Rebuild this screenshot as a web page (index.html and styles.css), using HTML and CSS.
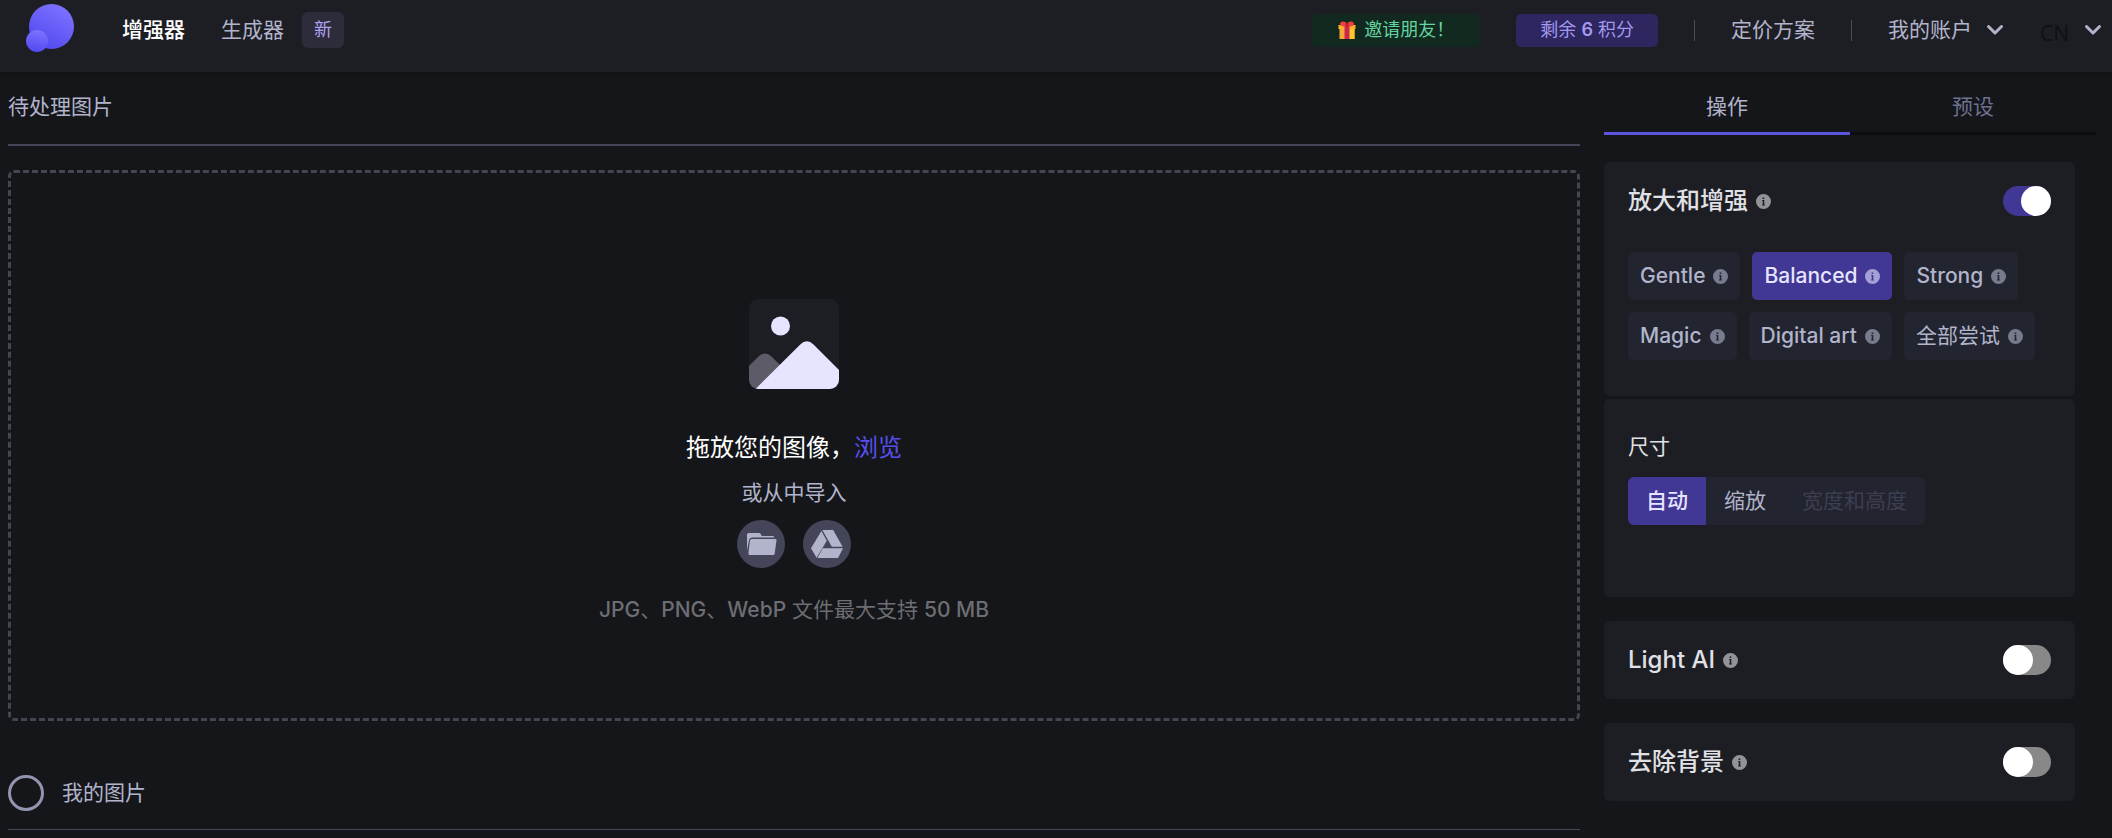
FILE: index.html
```html
<!DOCTYPE html>
<html lang="zh-CN">
<head>
    <title>增强器</title>
    <meta charset="UTF-8">
    <meta name="viewport" content="width=device-width, initial-scale=1">
    <link rel="stylesheet" href="styles.css">
</head>
<body>
    <svg class="sprite" aria-hidden="true">
        <symbol id="info" viewBox="0 0 15 15">
            <path fill="currentColor" fill-rule="evenodd" d="M7.5 0a7.5 7.5 0 1 1 0 15a7.5 7.5 0 0 1 0-15zM6.6 3.6v1.500h1.700V3.600zM6.200 6v1h.5v3.600h-.6v1h2.800v-1h-.6V6z"/>
        </symbol>
        <symbol id="chevron" viewBox="0 0 18 12">
            <path fill="none" stroke="currentColor" stroke-width="3" stroke-linecap="round" stroke-linejoin="round" d="M2.5 2.500L9 9L15.500 2.500"/>
        </symbol>
    </svg>

    <header class="header">
        <a class="logo" href="#" aria-label="首页">
            <svg width="48" height="52" viewBox="0 0 48 52">
                <defs>
                    <linearGradient id="big" x1="0.8" y1="0" x2="0.2" y2="1">
                        <stop offset="0" stop-color="#7f74ff"/>
                        <stop offset="1" stop-color="#4f46f0"/>
                    </linearGradient>
                    <linearGradient id="small" x1="0.6" y1="0" x2="0.4" y2="1">
                        <stop offset="0" stop-color="#7d73ff"/>
                        <stop offset="1" stop-color="#5148f2"/>
                    </linearGradient>
                </defs>
                <circle cx="25.500" cy="22.500" r="22.500" fill="url(#big)"/>
                <circle cx="11" cy="37" r="11" fill="url(#small)"/>
            </svg>
        </a>
        <nav class="nav">
            <a class="active" href="#">增强器</a>
            <a href="#">生成器</a>
            <span class="badge">新</span>
        </nav>
        <div class="header-right">
            <button class="pill invite" type="button">
                <svg width="18" height="18" viewBox="0 0 18 18" aria-hidden="true">
                    <path fill="#f9a63a" d="M1.500 7h15v11h-15z"/>
                    <path fill="#ffc928" d="M11 7h5.500v11H11z"/>
                    <path fill="#ffb02e" d="M.5 4h17v4H.5z"/>
                    <path fill="#c9284d" d="M6.500 4h5v14h-5z"/>
                    <path fill="#f0413c" d="M9 5C5 6 1.500 5 2.200 2.200C3-.6 7.500.2 9 2.500C10.500.2 15-.6 15.800 2.200C16.500 5 13 6 9 5z"/>
                    <path fill="#b81f3f" d="M7.500 2h3v3.500h-3z"/>
                </svg>
                邀请朋友！
            </button>
            <button class="pill credits" type="button"><span>剩余 <b>6</b> 积分</span></button>
            <span class="separator"></span>
            <a href="#">定价方案</a>
            <span class="separator"></span>
            <button class="account" type="button">
                我的账户
                <svg width="18" height="12"><use href="#chevron"/></svg>
            </button>
            <label class="language">
                <select aria-label="语言">
                    <option>CN</option>
                </select>
                <svg width="18" height="12"><use href="#chevron"/></svg>
            </label>
        </div>
    </header>

    <div class="page">
        <main class="content">
            <h2 class="section-title">待处理图片</h2>

            <section class="dropzone">
                <svg width="90" height="90" viewBox="0 0 90 90" aria-hidden="true">
                    <clipPath id="frame"><rect width="90" height="90" rx="9"/></clipPath>
                    <g clip-path="url(#frame)">
                        <rect width="90" height="90" fill="#1d1e24"/>
                        <circle cx="31.500" cy="27" r="9.500" fill="#e6e4ff"/>
                        <path fill="#5d5b68" d="M0 67L9.500 57.500Q16 51.500 22.500 57.500L32 67V90H0z"/>
                        <path fill="#e6e4ff" d="M6.500 90L51 45.800Q57.700 39 64.500 45.500L90 71V90z"/>
                    </g>
                </svg>
                <p class="drop-title">拖放您的图像，<a href="#">浏览</a></p>
                <p class="drop-sub">或从中导入</p>
                <div class="sources">
                    <button type="button" aria-label="文件夹">
                        <svg width="48" height="48" viewBox="0 0 48 48">
                            <path d="M10 31V14.500Q10 13 11.500 13H22Q23.500 13 24 14.500L24.700 16H36Q37.300 16 37.300 17.500H15Q12.500 17.500 12 20z"/>
                            <path d="M15 19H38.500Q39.700 19 39.500 20.200L37.700 33.500Q37.500 35 36 35H12.500Q11.200 35 11.400 33.500L12.800 21Q13 19 15 19z"/>
                        </svg>
                    </button>
                    <button type="button" aria-label="Google Drive">
                        <svg width="48" height="48" viewBox="0 0 48 48">
                            <path d="M19.300 10H30.200L39.600 26.800H28.800z"/>
                            <path d="M18.400 11L23.800 20.700L13.600 37.700L8 28.200z"/>
                            <path d="M19.700 28.300H40L35 38H14.400z"/>
                        </svg>
                    </button>
                </div>
                <p class="drop-hint"><b>JPG</b>、<b>PNG</b>、<b>WebP</b> 文件最大支持 <b>50 MB</b></p>
            </section>

            <div class="my-images">
                <input type="checkbox" id="select-all">
                <label for="select-all">我的图片</label>
            </div>
        </main>

        <aside class="sidebar">
            <div class="tabs">
                <button class="tab active" type="button">操作</button>
                <button class="tab" type="button">预设</button>
            </div>

            <section class="card upscale">
                <div class="card-head">
                    <label for="upscale">放大和增强</label>
                    <svg class="info" width="15" height="15"><use href="#info"/></svg>
                    <input class="toggle" type="checkbox" id="upscale" checked>
                </div>
                <div class="chips">
                    <button class="chip" type="button"><b>Gentle</b> <svg class="info" width="15" height="15"><use href="#info"/></svg></button>
                    <button class="chip active" type="button"><b>Balanced</b> <svg class="info" width="15" height="15"><use href="#info"/></svg></button>
                    <button class="chip" type="button"><b>Strong</b> <svg class="info" width="15" height="15"><use href="#info"/></svg></button>
                </div>
                <div class="chips">
                    <button class="chip" type="button"><b>Magic</b> <svg class="info" width="15" height="15"><use href="#info"/></svg></button>
                    <button class="chip" type="button"><b>Digital art</b> <svg class="info" width="15" height="15"><use href="#info"/></svg></button>
                    <button class="chip" type="button">全部尝试 <svg class="info" width="15" height="15"><use href="#info"/></svg></button>
                </div>
            </section>

            <section class="card size">
                <h3>尺寸</h3>
                <div class="segments">
                    <button class="active" type="button">自动</button>
                    <button type="button">缩放</button>
                    <button type="button" disabled>宽度和高度</button>
                </div>
            </section>

            <section class="card">
                <div class="card-head">
                    <label for="light">Light AI</label>
                    <svg class="info" width="15" height="15"><use href="#info"/></svg>
                    <input class="toggle" type="checkbox" id="light">
                </div>
            </section>

            <section class="card">
                <div class="card-head">
                    <label for="background">去除背景</label>
                    <svg class="info" width="15" height="15"><use href="#info"/></svg>
                    <input class="toggle" type="checkbox" id="background">
                </div>
            </section>
        </aside>
    </div>
</body>
</html>
```
FILE: styles.css
```css
* {
    box-sizing: border-box;
}

body {
    margin: 0;
    background-color: #15161a;
    color: #b1b4cb;
    font-family: Inter, "Noto Sans CJK SC", sans-serif;
    font-size: 21px;
    line-height: 30px;
}

h2, h3, p {
    margin: 0;
    font-size: 21px;
    font-weight: 400;
}

b {
    font-weight: 500;
}

a {
    color: inherit;
    text-decoration: none;
}

button, select {
    margin: 0;
    padding: 0;
    border: 0;
    background: none;
    color: inherit;
    font: inherit;
    cursor: pointer;
}

svg {
    display: block;
    flex-shrink: 0;
}

.sprite {
    display: none;
}

/* header */

.header {
    display: flex;
    align-items: center;
    height: 72px;
    padding: 0 10px 12px 26px;
    background-color: #1d1e24;
    box-shadow: 0 1px 12px rgba(0, 0, 0, 0.2);
    white-space: nowrap;
}

.nav {
    display: flex;
    align-items: center;
    gap: 36px;
    margin-left: 48px;
}

.nav .active {
    color: #fff;
    font-weight: 500;
}

.badge {
    margin-left: -18px;
    padding: 3px 12px;
    border-radius: 6px;
    background-color: #2d2c3a;
    color: #aca2ee;
    font-size: 18px;
}

.header-right {
    display: flex;
    align-items: center;
    gap: 36px;
    margin-left: auto;
}

.pill {
    display: flex;
    align-items: center;
    justify-content: center;
    gap: 8px;
    height: 33px;
    padding: 0 24px;
    border-radius: 5px;
    font-size: 18px;
}

.invite {
    padding: 0 26px;
    background-color: #11291f;
    color: #65d3a0;
}

.credits {
    background-color: #2d265f;
    color: #a39af0;
}

.credits b {
    font-weight: 600;
}

.separator {
    width: 1px;
    height: 21px;
    background-color: #4a4b5c;
}

.account, .language {
    display: flex;
    align-items: center;
    gap: 14px;
}

.language select {
    appearance: none;
    padding-top: 6px;
    color: #101116;
    font-family: "Noto Sans", sans-serif;
}

/* layout */

.page {
    display: flex;
    gap: 24px;
    padding-left: 8px;
}

.content {
    flex: 1;
}

.section-title {
    padding: 20px 0 22px;
    border-bottom: 2px solid #454559;
}

.dropzone {
    display: flex;
    flex-direction: column;
    align-items: center;
    min-height: 551px;
    margin-top: 24px;
    padding: 126px 24px 90px;
    border: 3px dashed #454551;
    border-radius: 6px;
}

.drop-title {
    margin-top: 41px;
    color: #fff;
    font-size: 24px;
    line-height: 36px;
}

.drop-title a {
    color: #564ff0;
}

.drop-sub {
    margin-top: 12px;
}

.sources {
    display: flex;
    gap: 18px;
    margin: 12px 0 27px;
}

.sources button {
    border-radius: 50%;
    background-color: #454559;
}

.sources svg {
    fill: #b1b4cb;
}

.drop-hint {
    color: #6d6e73;
}

.my-images {
    display: flex;
    align-items: center;
    gap: 18px;
    margin-top: 54px;
    padding-bottom: 18px;
    border-bottom: 1px solid #454559;
}

.my-images input {
    appearance: none;
    width: 36px;
    height: 36px;
    margin: 0;
    border: 3px solid #9295b0;
    border-radius: 50%;
}

/* sidebar */

.sidebar {
    width: 508px;
    padding-right: 37px;
}

.tabs {
    display: flex;
    margin: 0 -21px 27px 0;
}

.tab {
    flex: 1;
    padding: 20px 0 10px;
    border-bottom: 3px solid #0c0d10;
    color: #6e7190;
}

.tab.active {
    border-color: #5b54dc;
    color: #b1b4cb;
}

.card {
    margin-bottom: 24px;
    padding: 24px;
    border-radius: 6px;
    background-color: #1d1e24;
}

.card-head {
    display: flex;
    align-items: center;
    gap: 8px;
    color: #e0e1e6;
    font-size: 24px;
    font-weight: 500;
}

.info {
    opacity: 0.6;
}

.toggle {
    appearance: none;
    display: flex;
    width: 48px;
    height: 30px;
    margin: 0 0 0 auto;
    border-radius: 15px;
    background-color: #888;
    cursor: pointer;
}

.toggle::before {
    content: "";
    width: 30px;
    height: 30px;
    border-radius: 50%;
    background-color: #fff;
}

.toggle:checked {
    justify-content: flex-end;
    background-color: #413795;
}

.upscale {
    margin-bottom: 3px;
    padding-bottom: 36px;
}

.upscale .card-head {
    margin-bottom: 36px;
}

.chips {
    display: flex;
    gap: 12px;
}

.chips + .chips {
    margin-top: 12px;
}

.chip {
    display: flex;
    align-items: center;
    gap: 8px;
    height: 48px;
    padding: 0 12px;
    border-radius: 5px;
    background-color: #222430;
    white-space: nowrap;
}

.chip.active {
    background-color: #413795;
    color: #e6e4ff;
}

.size {
    padding: 33px 24px 72px;
}

.size h3 {
    color: #e0e1e6;
}

.segments {
    display: inline-flex;
    margin-top: 15px;
    border-radius: 6px;
    background-color: #222430;
    overflow: hidden;
    vertical-align: top;
}

.segments button {
    height: 48px;
    padding: 0 18px;
}

.segments .active {
    background-color: #413795;
    color: #e6e4ff;
    font-weight: 500;
}

.segments button:disabled {
    color: #3d3e50;
}
```
